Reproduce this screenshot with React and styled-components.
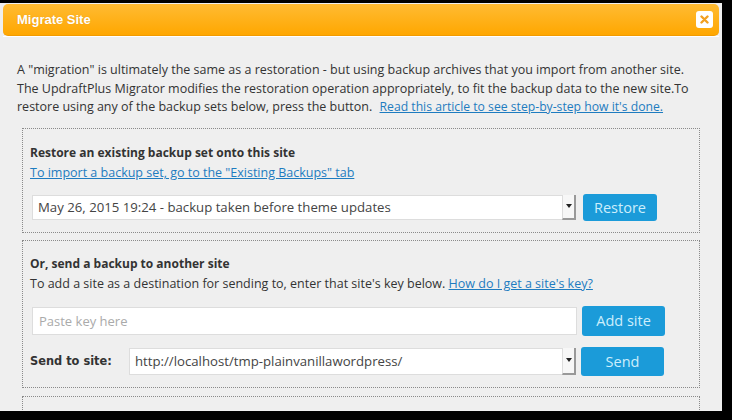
import React from "react";
import styled, { createGlobalStyle } from "styled-components";

const GlobalStyle = createGlobalStyle`
  html, body {
    margin: 0;
    padding: 0;
    background: #000;
  }
  body {
    font-family: "Open Sans", "DejaVu Sans", sans-serif;
    color: #333;
    overflow: hidden;
  }
`;

const Dialog = styled.div`
  width: 716px;
  height: 407px;
  margin-top: 3px;
  padding: 1px 3px 0 3px;
  background: #efefef;
  overflow: hidden;
  display: flex;
  flex-direction: column;
`;

const Header = styled.div`
  height: 32px;
  flex: none;
  border-radius: 5px;
  background: linear-gradient(#ffbb33, #ffa700);
  border-bottom: 1px solid #f29b00;
  box-sizing: border-box;
  display: flex;
  align-items: center;
  justify-content: space-between;
  padding: 0 6px 0 14px;
`;

const Title = styled.span`
  color: #fff;
  font-family: "Liberation Sans", sans-serif;
  font-weight: bold;
  font-size: 13px;
  text-shadow: 0 0 1px rgba(160, 90, 0, 0.3);
`;

const Close = styled.button`
  width: 17px;
  height: 17px;
  padding: 0;
  border: none;
  border-radius: 3px;
  background: #fff;
  display: flex;
  align-items: center;
  justify-content: center;
`;

const Content = styled.div`
  padding: 24px 0 0 14px;
  border-top: 1px solid #fff;
  display: flex;
  flex-direction: column;
`;

const Intro = styled.p`
  margin: 0 0 11px 0;
  font-size: 12.5px;
  line-height: 18.5px;
  white-space: nowrap;
`;

const Link = styled.a`
  color: #1e7cc0;
  text-decoration: underline;
  margin-left: ${(p) => p.$indent || 0}px;
  font-size: ${(p) => p.$size || "inherit"};
`;

const Box = styled.div`
  margin-left: 5px;
  width: 678px;
  box-sizing: border-box;
  border: 1px dotted #8a8a8a;
  padding: ${(p) => p.$pad || "14px 0 11px 7px"};
  margin-top: ${(p) => p.$gap || 0}px;
  display: flex;
  flex-direction: column;
`;

const BoxTitle = styled.div`
  font-weight: bold;
  font-size: 12px;
  line-height: 20px;
`;

const Line = styled.div`
  font-size: 12.5px;
  line-height: 20px;
`;

const Row = styled.div`
  display: flex;
  align-items: center;
  gap: ${(p) => p.$gap || 5}px;
  padding-left: 2px;
  margin-top: ${(p) => p.$top || 0}px;
`;

const Label = styled.span`
  font-family: "DejaVu Sans", sans-serif;
  font-weight: bold;
  font-size: 11.4px;
  width: 94px;
  margin-left: -2px;
`;

const Select = styled.div`
  width: ${(p) => p.$w}px;
  height: ${(p) => p.$h}px;
  box-sizing: border-box;
  background: #fff;
  border: 1px solid #ddd;
  display: flex;
  align-items: center;
  justify-content: space-between;
  font-size: 13.2px;
  color: #444;
  padding-left: 5px;
`;

const Arrow = styled.span`
  width: 14px;
  height: calc(100% + 2px);
  margin-right: -1px;
  box-sizing: border-box;
  border-right: 2px solid #999;
  border-bottom: 2px solid #999;
  border-left: 1px solid #ddd;
  display: flex;
  align-items: center;
  justify-content: center;
  background: #f7f7f7;
  &::after {
    content: "";
    border-left: 3px solid transparent;
    border-right: 3px solid transparent;
    border-top: 4px solid #222;
  }
`;

const Input = styled.input`
  width: ${(p) => p.$w}px;
  height: 28px;
  box-sizing: border-box;
  border: 1px solid #ddd;
  background: #fff;
  padding: 0 6px;
  font-family: "Open Sans", sans-serif;
  font-size: 13px;
  outline: none;
  &::placeholder {
    color: #aaa;
  }
`;

const Button = styled.button`
  width: ${(p) => p.$w}px;
  height: ${(p) => p.$h}px;
  border: none;
  border-radius: 3px;
  background: #1b9bd9;
  color: #cdeefc;
  font-family: "Open Sans", sans-serif;
  font-size: 14.5px;
  padding: 0;
`;

export default function App() {
  return (
    <>
      <GlobalStyle />
      <Dialog>
        <Header>
          <Title>Migrate Site</Title>
          <Close aria-label="close">
            <svg width="9" height="9" viewBox="0 0 9 9">
              <path d="M1.5 1.5 L7.5 7.5 M7.5 1.5 L1.5 7.5" stroke="#f2a020" strokeWidth="2.4" strokeLinecap="round" />
            </svg>
          </Close>
        </Header>
        <Content>
          <Intro>
            A "migration" is ultimately the same as a restoration - but using backup archives that you import from another site.
            <br />
            The UpdraftPlus Migrator modifies the restoration operation appropriately, to fit the backup data to the new site.To
            <br />
            restore using any of the backup sets below, press the button.{" "}
            <Link href="#" $indent={4} $size="12.2px">Read this article to see step-by-step how it's done.</Link>
          </Intro>
          <Box>
            <BoxTitle>Restore an existing backup set onto this site</BoxTitle>
            <Line>
              <Link href="#">To import a backup set, go to the "Existing Backups" tab</Link>
            </Line>
            <Row $top={11} $gap={7}>
              <Select $w={544} $h={25}>
                May 26, 2015 19:24 - backup taken before theme updates
                <Arrow />
              </Select>
              <Button $w={74} $h={27}>Restore</Button>
            </Row>
          </Box>
          <Box $gap={7} $pad="13px 0 11px 7px">
            <BoxTitle>Or, send a backup to another site</BoxTitle>
            <Line>
              To add a site as a destination for sending to, enter that site's key below.{" "}
              <Link href="#">How do I get a site's key?</Link>
            </Line>
            <Row $top={12}>
              <Input $w={545} placeholder="Paste key here" />
              <Button $w={83} $h={30}>Add site</Button>
            </Row>
            <Row $top={11}>
              <Label>Send to site:</Label>
              <Select $w={447} $h={27}>
                http://localhost/tmp-plainvanillawordpress/
                <Arrow />
              </Select>
              <Button $w={83} $h={29}>Send</Button>
            </Row>
          </Box>
          <Box $gap={8} $pad="40px 0 0 7px" />
        </Content>
      </Dialog>
    </>
  );
}
